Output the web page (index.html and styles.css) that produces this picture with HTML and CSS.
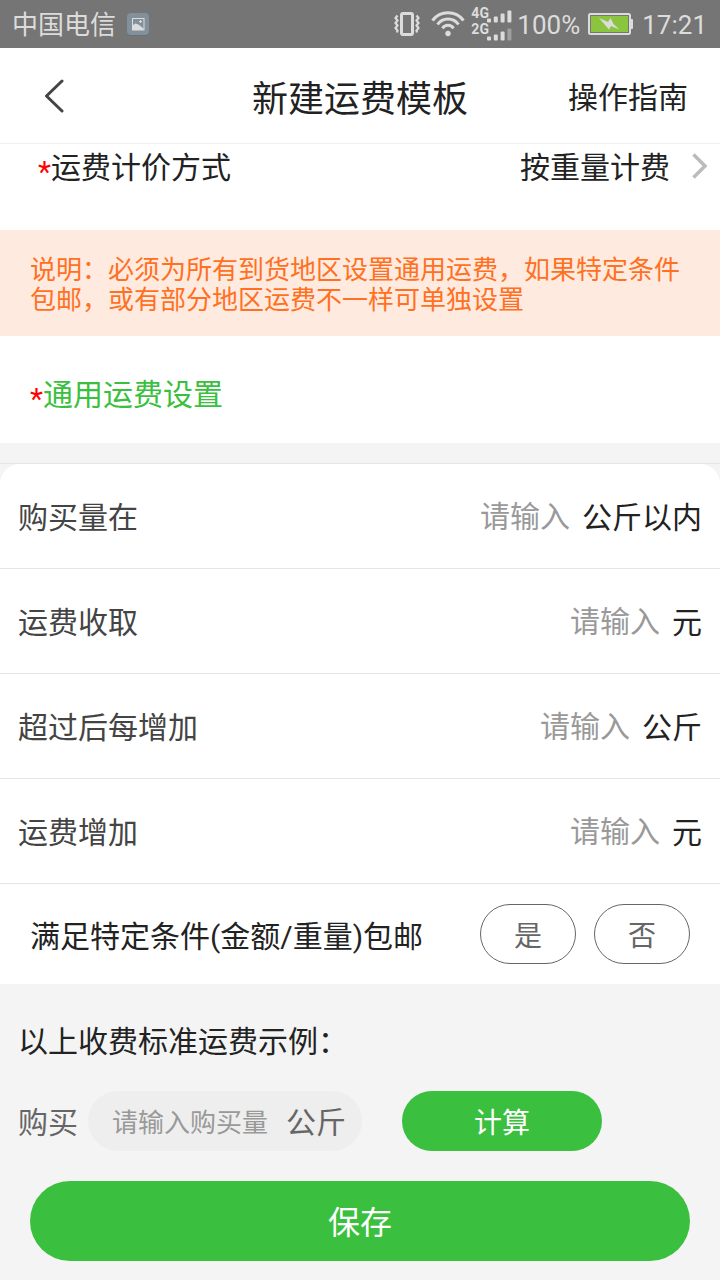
FILE: index.html
```html
<!DOCTYPE html>
<html lang="zh-CN">
<head>
  <meta charset="UTF-8">
  <meta name="viewport" content="width=device-width, initial-scale=1.0">
  <title>新建运费模板</title>
  <link rel="stylesheet" href="styles.css">
</head>
<body>

<div class="page">
  <div class="status-bar">
    <span class="carrier">中国电信</span>
    <svg class="icon-photo" width="22" height="23" viewBox="0 0 22 23">
      <rect x="0" y="0.5" width="22" height="22.5" rx="4" fill="#66717a"/>
      <rect x="0" y="0" width="22" height="22" rx="4" fill="#82909b"/>
      <rect x="5.5" y="5.5" width="11.5" height="11.5" fill="none" stroke="#dcdcdc"/>
      <path d="M6 12l2.500-1.500 3 1 5 4v1.500H6z" fill="#dcdcdc"/>
      <path d="M13.500 7v3M12 8.500h3" stroke="#dcdcdc"/>
    </svg>
    <div class="status-right">
      <svg class="icon-vibrate" width="27" height="24" viewBox="0 0 27 24">
        <rect x="7.500" y="1.500" width="11" height="21" rx="1.500" fill="none" stroke="#dcdcdc" stroke-width="3"/>
        <path d="M3.500 3.500L1.500 6l2 2.500-2 2.500 2 2.500-2 2.500 2 2.500-.5 2M22.500 3.500L24.500 6l-2 2.500 2 2.500-2 2.500 2 2.500-2 2.500.5 2" fill="none" stroke="#dcdcdc" stroke-width="2.200"/>
      </svg>
      <svg class="icon-wifi" width="34" height="26" viewBox="0 0 34 26">
        <path d="M1.500 9.500a19.500 19.500 0 0 1 31 0M6.500 13.500a12.700 12.700 0 0 1 21 0M11.500 17.300a6.600 6.600 0 0 1 11 0" fill="none" stroke="#dcdcdc" stroke-width="3"/>
        <circle cx="17" cy="22.500" r="2.700" fill="#dcdcdc"/>
      </svg>
      <div class="signals">
        <div class="signal">
          <span>4G</span>
          <svg width="25" height="13" viewBox="0 0 25 13" fill="#dcdcdc">
            <rect x="0" y="8.500" width="4" height="4" rx="1"/>
            <rect x="6.800" y="6.500" width="4" height="6" rx="1"/>
            <rect x="13.600" y="3.500" width="4" height="9" rx="1"/>
            <rect x="20.400" y="0.500" width="4" height="12" rx="1"/>
          </svg>
        </div>
        <div class="signal">
          <span>2G</span>
          <svg width="25" height="13" viewBox="0 0 25 13" fill="#dcdcdc">
            <rect x="0" y="8.500" width="4" height="4" rx="1"/>
            <rect x="6.800" y="6.500" width="4" height="6" rx="1"/>
            <rect x="13.600" y="3.500" width="4" height="9" rx="1"/>
            <rect x="20.400" y="0.500" width="4" height="12" rx="1" fill="#a0a0a0"/>
          </svg>
        </div>
      </div>
      <span class="battery-text">100%</span>
      <svg class="icon-battery" width="45" height="22" viewBox="0 0 45 22">
        <rect x="1" y="1" width="41" height="20" rx="1.500" fill="#757575" stroke="#dcdcdc" stroke-width="2"/>
        <rect x="42" y="6" width="3" height="10" rx="1" fill="#dcdcdc"/>
        <rect x="3" y="3" width="37" height="16" fill="#8bc540"/>
        <path d="M11 5l9 4 2.500-4 3 6 6 5.500-8.500-3.500-2 3.500z" fill="#dcdcdc"/>
      </svg>
      <span class="clock">17:21</span>
    </div>
  </div>

  <div class="header">
    <svg class="icon-back" width="20" height="34" viewBox="0 0 20 34">
      <path d="M18 2L2.500 17 18 32" fill="none" stroke="#444" stroke-width="3" stroke-linecap="round" stroke-linejoin="round"/>
    </svg>
    <h1>新建运费模板</h1>
    <a class="guide">操作指南</a>
  </div>

  <div class="method-row">
    <span><i class="star">*</i>运费计价方式</span>
    <div class="method-value">
      <span>按重量计费</span>
      <svg width="16" height="26" viewBox="0 0 16 26">
        <path d="M1.500 1.500L13 13 1.500 24.500" fill="none" stroke="#bbb" stroke-width="3.500"/>
      </svg>
    </div>
  </div>

  <div class="notice">说明：必须为所有到货地区设置通用运费，如果特定条件包邮，或有部分地区运费不一样可单独设置</div>

  <div class="section-title"><i class="star">*</i>通用运费设置</div>

  <div class="card-wrap">
    <div class="card">
      <div class="row">
        <label>购买量在</label>
        <input type="text" placeholder="请输入">
        <span class="unit">公斤以内</span>
      </div>
      <div class="row">
        <label>运费收取</label>
        <input type="text" placeholder="请输入">
        <span class="unit">元</span>
      </div>
      <div class="row">
        <label>超过后每增加</label>
        <input type="text" placeholder="请输入">
        <span class="unit">公斤</span>
      </div>
      <div class="row">
        <label>运费增加</label>
        <input type="text" placeholder="请输入">
        <span class="unit">元</span>
      </div>
      <div class="free-row">
        <span>满足特定条件(金额/重量)包邮</span>
        <div class="choices">
          <button class="choice">是</button>
          <button class="choice">否</button>
        </div>
      </div>
    </div>
  </div>

  <div class="example">
    <p>以上收费标准运费示例：</p>
    <div class="calc-row">
      <span>购买</span>
      <div class="amount">
        <input type="text" placeholder="请输入购买量">
        <span>公斤</span>
      </div>
      <button class="calc-btn">计算</button>
    </div>
    <button class="save-btn">保存</button>
  </div>
</div>

</body>
</html>
```

FILE: styles.css
```css
* {
  box-sizing: border-box;
}

body {
  margin: 0;
  background: #f4f4f4;
  color: #222;
  font-family: Roboto, "Noto Sans CJK SC", sans-serif;
  font-size: 30px;
}

input, button {
  font-family: inherit;
  border: none;
  background: none;
  padding: 0;
  outline: none;
}

svg {
  display: block;
  flex-shrink: 0;
}

.page {
  width: 720px;
  height: 1280px;
  overflow: hidden;
}

/* status bar */
.status-bar {
  display: flex;
  align-items: center;
  height: 48px;
  padding: 0 13px 0 12px;
  background: #757575;
  color: #dcdcdc;
  font-size: 26px;
  line-height: 48px;
}

.carrier, .battery-text, .clock {
  padding-top: 2px;
}

.icon-photo {
  margin-left: 11px;
}

.status-right {
  display: flex;
  align-items: center;
  margin-left: auto;
}

.icon-wifi {
  margin-left: 10px;
}

.signals {
  margin-left: 6px;
  margin-right: 1px;
  width: 41px;
}

.signal {
  display: flex;
  align-items: flex-end;
  height: 16px;
  font-size: 14px;
  font-weight: bold;
  line-height: 16px;
}

.signal span {
  width: 16px;
  height: 18px;
}

.signal + .signal {
  margin-top: 2px;
}

.signal + .signal span {
  height: 20px;
}

.battery-text {
  margin-left: 4px;
}

.icon-battery {
  margin: 0 9px 0 8px;
}

/* header */
.header {
  display: grid;
  grid-template-columns: 1fr auto 1fr;
  align-items: center;
  height: 96px;
  padding: 0 32px 0 44px;
  background: #fff;
  border-bottom: 1px solid #f0f0f0;
}

.header h1 {
  margin: 0 0 0 -12px;
  font-size: 36px;
  font-weight: normal;
}

.guide {
  padding-bottom: 2px;
  text-align: right;
}

.star {
  color: #f00;
  font-style: normal;
  line-height: 0;
  vertical-align: -4px;
}

.method-row {
  display: flex;
  justify-content: space-between;
  height: 86px;
  padding: 0 12px 0 38px;
  background: #fff;
  line-height: 48px;
}

.method-value {
  display: flex;
  gap: 22px;
}

.method-value svg {
  margin-top: 9px;
}

.notice {
  height: 106px;
  padding: 25px 30px 0;
  background: #ffeadf;
  color: #ff7022;
  font-size: 26px;
  line-height: 30px;
}

.section-title {
  height: 107px;
  padding-left: 30px;
  background: #fff;
  color: #3abf3e;
  line-height: 118px;
}

/* form card */
.card-wrap {
  margin-top: 20px;
  border-top: 1px solid #e6e6e6;
}

.card {
  border-radius: 20px 20px 0 0;
  background: #fff;
}

.row {
  display: flex;
  align-items: center;
  height: 105px;
  padding: 0 18px;
  border-bottom: 1px solid #e6e6e6;
}

.row label {
  padding-bottom: 2px;
  color: #444;
}

.unit {
  padding-bottom: 2px;
}

.row input {
  flex: 1;
  min-width: 0;
  margin-right: 12px;
  font-size: 30px;
  text-align: right;
}

input::placeholder {
  color: #999;
}

.free-row {
  display: flex;
  align-items: center;
  justify-content: space-between;
  height: 100px;
  padding: 0 30px;
}

.choices {
  display: flex;
  gap: 18px;
}

.choice {
  width: 96px;
  height: 60px;
  border: 1px solid #666;
  border-radius: 30px;
  color: #666;
  font-size: 28px;
}

/* example */
.example {
  padding: 34px 18px 0;
}

.example p {
  margin: 0;
  line-height: 48px;
}

.calc-row {
  display: flex;
  align-items: center;
  margin-top: 25px;
  color: #666;
}

.calc-row span {
  padding-bottom: 3px;
}

.amount {
  display: flex;
  align-items: center;
  width: 274px;
  height: 60px;
  margin-left: 10px;
  padding: 0 16px 0 24px;
  border-radius: 30px;
  background: #eee;
}

.amount input {
  flex: 1;
  min-width: 0;
  padding-top: 3px;
  font-size: 26px;
}

.calc-btn {
  width: 200px;
  height: 60px;
  margin-left: 40px;
  border-radius: 30px;
  background: #3abf3e;
  color: #fff;
  font-size: 28px;
}

.save-btn {
  display: block;
  width: 660px;
  height: 80px;
  margin: 30px 0 0 12px;
  padding-bottom: 2px;
  border-radius: 40px;
  background: #3abf3e;
  color: #fff;
  font-size: 32px;
}
```
